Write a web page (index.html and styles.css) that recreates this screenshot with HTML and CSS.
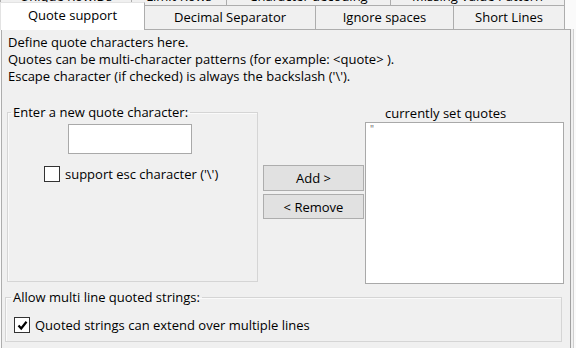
FILE: index.html
```html
<!DOCTYPE html>
<html lang="en">
<head>
  <meta charset="UTF-8" />
  <meta name="viewport" content="width=device-width, initial-scale=1.0" />
  <title>Quote support</title>
  <link rel="stylesheet" href="styles.css">
</head>
<body>
  <div class="tab-row back">
    <div class="tab t-rowid">Unique RowIDs</div>
    <div class="tab t-limit">Limit Rows</div>
    <div class="tab t-charset">Character decoding</div>
    <div class="tab t-missing last">Missing Value Pattern</div>
  </div>
  <div class="tab-row front">
    <div class="tab t-quote selected">Quote support</div>
    <div class="tab t-decimal">Decimal Separator</div>
    <div class="tab t-spaces">Ignore spaces</div>
    <div class="tab t-short last">Short Lines</div>
  </div>

  <div class="panel">
    <div class="desc">
      <p>Define quote characters here.</p>
      <p>Quotes can be multi-character patterns (for example: &lt;quote&gt; ).</p>
      <p>Escape character (if checked) is always the backslash ('\').</p>
    </div>

    <div class="quote-row">
      <fieldset class="group new-quote">
        <legend>Enter a new quote character:</legend>
        <input type="text" class="quote-input" />
        <label class="check-row esc">
          <span class="check"></span>
          <span>support esc character ('\')</span>
        </label>
      </fieldset>

      <div class="buttons">
        <button class="btn add">Add &gt;</button>
        <button class="btn remove">&lt; Remove</button>
      </div>

      <div class="quote-list">
        <div class="list-title">currently set quotes</div>
        <div class="list-box">
          <div class="list-item">"</div>
        </div>
      </div>
    </div>

    <fieldset class="group multi-line">
      <legend>Allow multi line quoted strings:</legend>
      <label class="check-row">
        <span class="check checked">
          <svg width="13" height="13" viewBox="0 0 13 13"><path d="M2.5 6.5 L5.2 9.5 L10.5 2.8" fill="none" stroke="#000" stroke-width="2.2"/></svg>
        </span>
        <span>Quoted strings can extend over multiple lines</span>
      </label>
    </fieldset>
  </div>
</body>
</html>
```

FILE: styles.css
```css
body {
  margin: 0;
  width: 576px;
  height: 348px;
  overflow: hidden;
  background: #fafafa;
  font-family: "Open Sans", "Liberation Sans", Arial, sans-serif;
  font-size: 13px;
  color: #000;
}

.tab-row {
  display: flex;
  align-items: flex-end;
}
.tab {
  box-sizing: border-box;
  text-align: center;
  background: #f0f0f0;
  border-top: 1px solid #adadad;
  border-left: 1px solid #adadad;
  white-space: nowrap;
}
.tab.last {
  border-right: 1px solid #adadad;
}
.tab-row.back {
  height: 5px;
  overflow: hidden;
}
.tab-row.back .tab {
  height: 18px;
  line-height: 17px;
  flex-shrink: 0;
}
.tab-row.front {
  height: 24px;
}
.tab-row.front .tab {
  height: 24px;
  line-height: 23px;
}
.tab-row.front .tab.selected {
  position: relative;
  z-index: 1;
  height: 28px;
  line-height: 25px;
  margin-bottom: -1px;
  background: #fff;
  border-right: 1px solid #adadad;
  border-left-color: #e3e3e3;
  border-top-color: #e3e3e3;
}
.t-rowid { width: 131px; }
.t-limit { width: 95px; }
.t-charset { width: 164px; }
.t-missing { width: 175px; }
.t-quote { width: 145px; }
.t-decimal { width: 170px; border-left: none !important; }
.t-spaces { width: 138px; }
.t-short { width: 112px; }

.panel {
  box-sizing: border-box;
  width: 570px;
  height: 330px;
  margin-left: 1px;
  padding: 4px 0 0 5px;
  background: #f0f0f0;
  border: 1px solid #adadad;
  border-right-color: #a0a0a0;
  box-shadow: 2px 0 0 #f0f0f0, 3px 0 0 #cfcfcf;
}

.desc {
  padding-left: 1px;
}
.desc p {
  margin: 0;
  line-height: 17px;
}

.quote-row {
  display: flex;
  align-items: flex-start;
  margin-top: 20px;
}

.group {
  box-sizing: border-box;
  margin: 0;
  padding: 0;
  border: 1px solid #d5d5d5;
  box-shadow: inset 1px 1px 0 #fafafa;
}
.group legend {
  padding: 0 2px;
  margin-left: 3px;
  line-height: 15px;
}

.new-quote {
  width: 251px;
  height: 177px;
}
.quote-input {
  display: block;
  box-sizing: border-box;
  width: 124px;
  height: 30px;
  margin: 4px 0 0 60px;
  border: 1px solid #a9a9a9;
  background: #fff;
}

.check-row {
  display: flex;
  align-items: center;
  gap: 5px;
  line-height: 16px;
}
.check-row.esc {
  margin: 12px 0 0 36px;
}
.check {
  box-sizing: border-box;
  width: 16px;
  height: 16px;
  border: 1px solid #333;
  background: #fff;
  display: flex;
  align-items: center;
  justify-content: center;
}

.buttons {
  display: flex;
  flex-direction: column;
  gap: 3px;
  width: 101px;
  margin: 60px 0 0 5px;
}
.btn {
  box-sizing: border-box;
  height: 26px;
  padding: 0;
  font-family: inherit;
  font-size: 13px;
  color: #000;
  background: #e1e1e1;
  border: 1px solid #adadad;
}
.btn.remove {
  height: 25px;
}

.quote-list {
  width: 199px;
  margin-left: 1px;
}
.list-title {
  line-height: 16px;
  padding: 0 0 1px 20px;
}
.list-box {
  box-sizing: border-box;
  height: 162px;
  background: #fff;
  border: 1px solid #a9a9a9;
}
.list-item {
  padding: 1px 0 0 4px;
  line-height: 10px;
  font-size: 10px;
  color: #666;
}

.multi-line {
  width: 557px;
  height: 52px;
  margin: 6px 0 0 -2px;
  padding-left: 8px;
}
.multi-line legend {
  margin-left: -3px;
}
.multi-line .check-row {
  margin-top: 12px;
}
```
